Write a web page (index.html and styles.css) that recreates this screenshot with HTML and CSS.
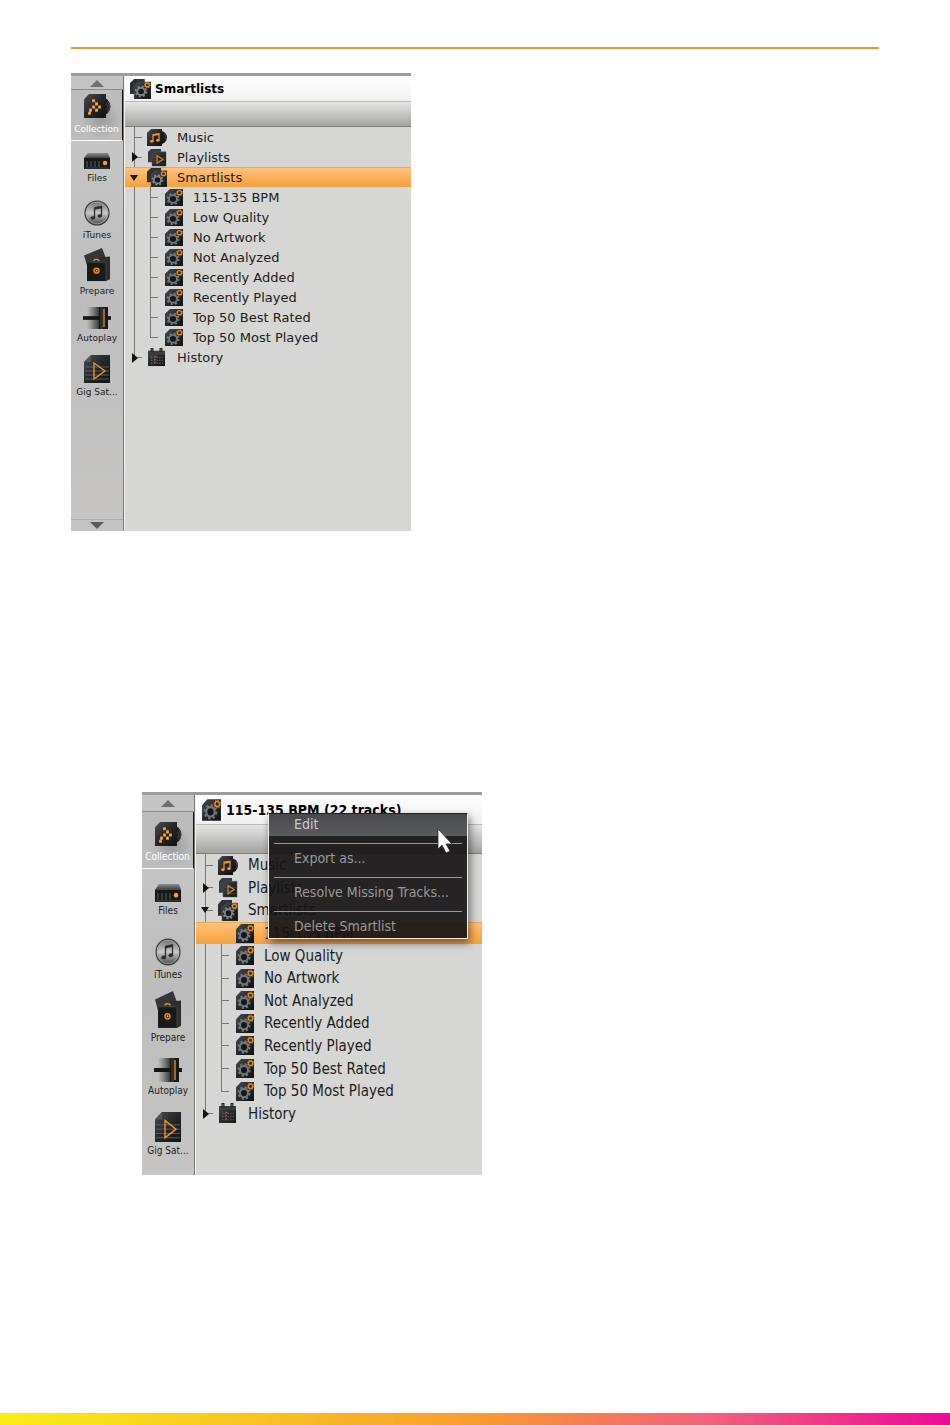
FILE: index.html
```html
<!DOCTYPE html>
<html lang="en">
<head>
    <meta charset="UTF-8">
    <meta name="viewport" content="width=device-width, initial-scale=1.0">
    <title>Smartlists</title>
    <link rel="stylesheet" href="styles.css">
</head>
<body>
    <!-- Icon shapes -->
    <svg class="sprite" aria-hidden="true">
        <defs>
            <linearGradient id="dark" x1="0" y1="0" x2="1" y2="1">
                <stop offset="0" stop-color="#484d52"/>
                <stop offset="0.5" stop-color="#24272a"/>
                <stop offset="1" stop-color="#111"/>
            </linearGradient>
            <linearGradient id="metal" x1="0" y1="0" x2="0" y2="1">
                <stop offset="0" stop-color="#6d6d6d"/>
                <stop offset="0.5" stop-color="#c9c9c9"/>
                <stop offset="1" stop-color="#444"/>
            </linearGradient>
            <linearGradient id="lid" x1="0" y1="0" x2="0" y2="1">
                <stop offset="0" stop-color="#8a8c8d"/>
                <stop offset="1" stop-color="#3d3f41"/>
            </linearGradient>
            <linearGradient id="fade">
                <stop offset="0" stop-color="#333" stop-opacity="0"/>
                <stop offset="1" stop-color="#222"/>
            </linearGradient>
        </defs>
        <symbol id="gear" viewBox="0 0 20 20" preserveAspectRatio="none">
            <path d="M6 1h13v18H1V6z" fill="url(#dark)"/>
            <circle cx="9" cy="11.500" r="5.500" fill="none" stroke="#71777b" stroke-width="2" stroke-dasharray="2.160 2.160"/>
            <circle cx="9" cy="11.500" r="4" fill="#15181a" stroke="#71777b" stroke-width="2"/>
            <circle cx="15.500" cy="5" r="3.300" fill="#2b2118" stroke="#a8651c" stroke-width="1" stroke-dasharray="1.300 1.290"/>
            <circle cx="15.500" cy="5" r="2.200" fill="#33261a" stroke="#dd8826" stroke-width="1.400"/>
        </symbol>
        <symbol id="gears" viewBox="0 0 20 20" preserveAspectRatio="none">
            <path d="M4 0h10v15H0V4z" fill="#2c3033"/>
            <path d="M8 3h12v17H4V7z" fill="url(#dark)" stroke="#4b5055" stroke-width="0.500"/>
            <circle cx="10.500" cy="12.500" r="5" fill="none" stroke="#7d868e" stroke-width="1.900" stroke-dasharray="1.960 1.960"/>
            <circle cx="10.500" cy="12.500" r="3.600" fill="#15181a" stroke="#7d868e" stroke-width="1.800"/>
            <circle cx="16.500" cy="6" r="2.900" fill="#2b2118" stroke="#b06b1f" stroke-width="1" stroke-dasharray="1.150 1.120"/>
            <circle cx="16.500" cy="6" r="2" fill="#33261a" stroke="#e8902a" stroke-width="1.300"/>
        </symbol>
        <symbol id="playlist" viewBox="0 0 20 20" preserveAspectRatio="none">
            <path d="M4 1h10v14H1V4z" fill="#383c40"/>
            <path d="M8 4h11v15H5V7z" fill="url(#dark)" stroke="#565b60" stroke-width="0.500"/>
            <path d="M6 10h12M6 13h12M6 16h12" stroke="#54585b" stroke-width="0.500"/>
            <path d="M10 8v8l6-4z" fill="none" stroke="#d88427" stroke-width="1.200"/>
        </symbol>
        <symbol id="music" viewBox="0 0 20 20" preserveAspectRatio="none">
            <circle cx="13" cy="10" r="7" fill="#1a1a1a"/>
            <path d="M17 6a5 5 0 0 1 1 7" fill="none" stroke="#555" stroke-width="0.700"/>
            <path d="M4 1h11v18H0V5z" fill="url(#dark)"/>
            <path d="M6 14V7l6-1v7" fill="none" stroke="#f39726" stroke-width="1.200"/>
            <path d="M6 7.500l6-1" stroke="#f39726" stroke-width="1.800"/>
            <ellipse cx="4.800" cy="14" rx="1.800" ry="1.400" fill="#f39726"/>
            <ellipse cx="10.800" cy="13" rx="1.800" ry="1.400" fill="#f39726"/>
        </symbol>
        <symbol id="calendar" viewBox="0 0 20 20" preserveAspectRatio="none">
            <path d="M1 3h17v16H1z" fill="url(#dark)"/>
            <path d="M1 3h17v4H1z" fill="#3a3e41"/>
            <path d="M5 0v4M14 0v4" stroke="#222" stroke-width="3"/>
            <path d="M5 1v2M14 1v2" stroke="#858585" stroke-width="0.800"/>
            <path d="M4 10h12M4 13h12M4 16h12" stroke="#5a5a5a" stroke-width="1.500" stroke-dasharray="1.500 1.200"/>
            <path d="M7 9h3M7 12h2M7 15h2" stroke="#8b5520" stroke-width="1.500"/>
        </symbol>
        <symbol id="collection" viewBox="0 0 28 26" preserveAspectRatio="none">
            <circle cx="18.500" cy="13" r="9" fill="#151515"/>
            <path d="M24.500 8a8 8 0 0 1 0 10M23.500 10a5 5 0 0 1 0 6" fill="none" stroke="#6a6a6a" stroke-width="0.700"/>
            <path d="M6 1h17v23H1V6z" fill="url(#dark)"/>
            <path d="M9 6h3v3H9zM12 9h3v3h-3zM9 12h3v3H9zM6 15h3v3H6zM12 15h3v3h-3zM15 12h3v3h-3zM5 18h3v3H5z" fill="#e58d24"/>
            <path d="M10 7h1v1h-1zM13 10h1v1h-1zM10 13h1v1h-1zM16 13h1v1h-1zM13 16h1v1h-1zM7 16h1v1h-1zM6 19h1v1h-1z" fill="#ffd38a"/>
        </symbol>
        <symbol id="files" viewBox="0 0 28 16" preserveAspectRatio="none">
            <path d="M5 0h20l2 5H1z" fill="url(#lid)"/>
            <path d="M1 5h26v11H1z" fill="#17181a"/>
            <path d="M4 8v6M8 8v6M12 8v6M16 8v6" stroke="#5d6063" stroke-width="1"/>
            <path d="M2 15h24" stroke="#55585a" stroke-width="0.700"/>
            <circle cx="22" cy="10" r="2.200" fill="#ff9d25"/>
        </symbol>
        <symbol id="itunes" viewBox="0 0 26 26" preserveAspectRatio="none">
            <circle cx="13" cy="13" r="12" fill="url(#metal)" stroke="#3b3b3b" stroke-width="1.200"/>
            <circle cx="13" cy="13" r="10.800" fill="none" stroke="#aaa" stroke-width="0.700"/>
            <path d="M10.500 18V8l7-1.500V16" fill="none" stroke="#2d2d2d" stroke-width="1.300"/>
            <path d="M10.500 8.500l7-1.500" stroke="#2d2d2d" stroke-width="2.500"/>
            <ellipse cx="8.800" cy="18" rx="2.300" ry="1.800" fill="#2d2d2d"/>
            <ellipse cx="15.800" cy="16" rx="2.300" ry="1.800" fill="#2d2d2d"/>
        </symbol>
        <symbol id="prepare" viewBox="0 0 28 36" preserveAspectRatio="none">
            <path d="M1 8l18-8 4 11-18 11z" fill="#34373a"/>
            <path d="M16 10l11-1v24l-4 2z" fill="#2b2d2f"/>
            <path d="M4 15h19v20H4z" fill="#191a1b"/>
            <path d="M4 15h19v19" fill="none" stroke="#4c4f52" stroke-width="0.700"/>
            <path d="M10.500 13.500c1-2 5-2 6 0" fill="none" stroke="#f09022" stroke-width="1.500"/>
            <circle cx="13.500" cy="24" r="2.500" fill="#2a1b0d" stroke="#e58a22" stroke-width="1.500"/>
            <circle cx="13.500" cy="24" r="1" fill="#ffad42"/>
        </symbol>
        <symbol id="autoplay" viewBox="0 0 28 24" preserveAspectRatio="none">
            <path d="M4 0h14v24H4z" fill="url(#fade)"/>
            <path d="M0 10h28v4H0z" fill="#151515"/>
            <path d="M16 0h9v24h-9z" fill="#171717"/>
            <path d="M17 0h3v24h-3z" fill="#2e2e2e"/>
            <path d="M21 2v20" stroke="#cf7d22" stroke-width="1.600"/>
        </symbol>
        <symbol id="gig" viewBox="0 0 28 28" preserveAspectRatio="none">
            <path d="M8 0h19v28H1V7z" fill="url(#dark)"/>
            <path d="M8 0v7H1z" fill="#50565a"/>
            <path d="M2 12h24M2 16h24M2 20h24M2 24h24" stroke="#707376" stroke-width="0.700"/>
            <path d="M11 8v16l11-8z" fill="none" stroke="#ed9228" stroke-width="1.400"/>
        </symbol>
    </svg>

    <main class="page">
        <hr class="rule">

        <section class="browser">
            <nav class="sidebar">
                <button class="scroll" aria-label="Scroll up"><span class="up"></span></button>
                <button class="source collection active"><svg><use href="#collection"/></svg>Collection</button>
                <button class="source files"><svg><use href="#files"/></svg>Files</button>
                <button class="source itunes"><svg><use href="#itunes"/></svg>iTunes</button>
                <button class="source prepare"><svg><use href="#prepare"/></svg>Prepare</button>
                <button class="source autoplay"><svg><use href="#autoplay"/></svg>Autoplay</button>
                <button class="source gig"><svg><use href="#gig"/></svg>Gig Sat...</button>
                <button class="scroll bottom" aria-label="Scroll down"><span class="down"></span></button>
            </nav>
            <div class="pane">
                <h2 class="title"><svg><use href="#gears"/></svg>Smartlists</h2>
                <div class="toolbar"></div>
                <ul class="tree">
                    <li><span class="trunk tick"></span><svg><use href="#music"/></svg><button>Music</button></li>
                    <li><span class="trunk tick closed"></span><svg><use href="#playlist"/></svg><button>Playlists</button></li>
                    <li class="selected"><span class="trunk open"></span><svg><use href="#gears"/></svg><button>Smartlists</button></li>
                    <li class="child"><span class="trunk"></span><span class="trunk tick"></span><svg><use href="#gear"/></svg><button>115-135 BPM</button></li>
                    <li class="child"><span class="trunk"></span><span class="trunk tick"></span><svg><use href="#gear"/></svg><button>Low Quality</button></li>
                    <li class="child"><span class="trunk"></span><span class="trunk tick"></span><svg><use href="#gear"/></svg><button>No Artwork</button></li>
                    <li class="child"><span class="trunk"></span><span class="trunk tick"></span><svg><use href="#gear"/></svg><button>Not Analyzed</button></li>
                    <li class="child"><span class="trunk"></span><span class="trunk tick"></span><svg><use href="#gear"/></svg><button>Recently Added</button></li>
                    <li class="child"><span class="trunk"></span><span class="trunk tick"></span><svg><use href="#gear"/></svg><button>Recently Played</button></li>
                    <li class="child"><span class="trunk"></span><span class="trunk tick"></span><svg><use href="#gear"/></svg><button>Top 50 Best Rated</button></li>
                    <li class="child"><span class="trunk"></span><span class="trunk tick last"></span><svg><use href="#gear"/></svg><button>Top 50 Most Played</button></li>
                    <li><span class="trunk tick last closed"></span><svg><use href="#calendar"/></svg><button>History</button></li>
                </ul>
            </div>
        </section>

        <section class="browser tall">
            <nav class="sidebar">
                <button class="scroll" aria-label="Scroll up"><span class="up"></span></button>
                <button class="source collection active"><svg><use href="#collection"/></svg>Collection</button>
                <button class="source files"><svg><use href="#files"/></svg>Files</button>
                <button class="source itunes"><svg><use href="#itunes"/></svg>iTunes</button>
                <button class="source prepare"><svg><use href="#prepare"/></svg>Prepare</button>
                <button class="source autoplay"><svg><use href="#autoplay"/></svg>Autoplay</button>
                <button class="source gig"><svg><use href="#gig"/></svg>Gig Sat...</button>
            </nav>
            <div class="pane">
                <h2 class="title"><svg><use href="#gear"/></svg>115-135 BPM (22 tracks)</h2>
                <div class="toolbar"></div>
                <ul class="tree">
                    <li><span class="trunk tick"></span><svg><use href="#music"/></svg><button>Music</button></li>
                    <li><span class="trunk tick closed"></span><svg><use href="#playlist"/></svg><button>Playlists</button></li>
                    <li><span class="trunk tick open"></span><svg><use href="#gears"/></svg><button>Smartlists</button></li>
                    <li class="child selected"><span class="trunk"></span><span class="trunk"></span><svg><use href="#gear"/></svg><button>115-135 BPM</button></li>
                    <li class="child"><span class="trunk"></span><span class="trunk tick"></span><svg><use href="#gear"/></svg><button>Low Quality</button></li>
                    <li class="child"><span class="trunk"></span><span class="trunk tick"></span><svg><use href="#gear"/></svg><button>No Artwork</button></li>
                    <li class="child"><span class="trunk"></span><span class="trunk tick"></span><svg><use href="#gear"/></svg><button>Not Analyzed</button></li>
                    <li class="child"><span class="trunk"></span><span class="trunk tick"></span><svg><use href="#gear"/></svg><button>Recently Added</button></li>
                    <li class="child"><span class="trunk"></span><span class="trunk tick"></span><svg><use href="#gear"/></svg><button>Recently Played</button></li>
                    <li class="child"><span class="trunk"></span><span class="trunk tick"></span><svg><use href="#gear"/></svg><button>Top 50 Best Rated</button></li>
                    <li class="child"><span class="trunk"></span><span class="trunk tick last"></span><svg><use href="#gear"/></svg><button>Top 50 Most Played</button></li>
                    <li><span class="trunk tick last closed"></span><svg><use href="#calendar"/></svg><button>History</button></li>
                </ul>
            </div>

            <!-- Context menu -->
            <div class="menu">
                <button class="hover">Edit</button>
                <hr>
                <button>Export as...</button>
                <hr>
                <button>Resolve Missing Tracks...</button>
                <hr>
                <button>Delete Smartlist</button>
                <svg class="cursor" viewBox="0 0 16 26"><path d="M1 1v20l4-4 4 8 4-2-4-7h6z" fill="#fff" stroke="#222" stroke-width="0.700"/></svg>
            </div>
        </section>
    </main>

    <footer class="stripe"></footer>
</body>
</html>
```
FILE: styles.css
```css
* {
    box-sizing: border-box;
}
body {
    margin: 0;
    min-height: 100vh;
    display: flex;
    flex-direction: column;
    background: #fff;
    font-family: "DejaVu Sans", Verdana, sans-serif;
    color: #1c1c1c;
}
button {
    margin: 0;
    padding: 0;
    border: none;
    background: none;
    font: inherit;
    color: inherit;
    text-align: left;
    white-space: nowrap;
    cursor: pointer;
}
.sprite {
    position: absolute;
    width: 0;
    height: 0;
}
.page {
    flex: 1;
    padding: 47px 71px 0;
}
.rule {
    height: 2px;
    margin: 0 0 24px;
    border: none;
    background: #e79a3c;
}

/* Browser panel */
.browser {
    position: relative;
    display: flex;
    width: 340px;
    min-height: 458px;
    border-top: 3px solid #9c9c9c;
    background: #d6d6d4;
}
.sidebar {
    display: flex;
    flex-direction: column;
    width: 53px;
    padding-top: 1px;
    border-right: 1px solid #777;
    background: linear-gradient(#c9c9c9, #bdbdbd 50%, #c6c5c4);
    font-size: 9px;
    line-height: 12px;
}
.scroll {
    display: flex;
    align-items: center;
    justify-content: center;
    height: 13px;
    border-bottom: 1px solid #8c8c8c;
    background: #c4c4c4;
}
.scroll.bottom {
    height: 12px;
    margin-top: auto;
    border-top: 1px solid #aaa;
    border-bottom: none;
}
.up, .down {
    border: 7px solid transparent;
    border-top-width: 0;
    border-bottom: 7px solid #707070;
}
.down {
    border-top: 7px solid #5c5c5c;
    border-bottom-width: 0;
}
.source {
    display: flex;
    flex-direction: column;
    align-items: center;
    justify-content: flex-end;
    gap: 3px;
}
.source svg {
    width: 28px;
    flex-shrink: 0;
}
.source.active {
    padding-bottom: 5px;
    border-bottom: 1px solid #fff;
    border-right: 1px solid #111;
    background: radial-gradient(circle at 60% 60%, #9c9c9c, #bcbcbc 45%);
    color: #fff;
}
.collection {
    height: 51px;
}
.collection svg {
    height: 27px;
}
.files {
    height: 43px;
}
.files svg {
    height: 16px;
}
.itunes {
    height: 57px;
}
.source.itunes svg {
    width: 26px;
    height: 26px;
}
.prepare {
    height: 56px;
}
.prepare svg {
    height: 34px;
}
.autoplay {
    height: 47px;
}
.autoplay svg {
    height: 22px;
}
.gig {
    height: 54px;
}
.gig svg {
    height: 28px;
}

/* Tree side */
.pane {
    flex: 1;
    border-left: 1px solid #f4f4f4;
    font-size: 13px;
}
.title {
    display: flex;
    align-items: center;
    gap: 4px;
    height: 26px;
    margin: 0;
    padding: 1px 0 0 5px;
    border-bottom: 1px solid #bbb;
    background: linear-gradient(#fff, #f1f1f1);
    font-size: 12px;
    color: #000;
}
.title svg {
    width: 21px;
    height: 20px;
}
.toolbar {
    height: 25px;
    border-bottom: 1px solid #7d7d7a;
    background: linear-gradient(#e6e6e5, #a3a3a0);
}
.tree {
    display: grid;
    grid-auto-rows: 1fr;
    height: 241px;
    margin: 0;
    padding: 0;
    list-style: none;
}
.tree li {
    display: flex;
    align-items: center;
    padding-left: 9px;
}
.tree svg {
    width: 20px;
    height: 19px;
    margin-right: 10px;
}
.tree .child svg {
    width: 20px;
    margin-right: 9px;
}
.tree .selected {
    border-top: 1px solid #e8a85a;
    background: linear-gradient(#fdc27a, #f5a13c);
}
.trunk {
    display: flex;
    align-items: center;
    align-self: stretch;
    width: 13px;
    background: linear-gradient(#777, #777) left top / 1px 100% no-repeat;
}
.child .trunk {
    width: 16px;
}
.child .trunk + .trunk {
    width: 14px;
}
.tick {
    background: linear-gradient(#777, #777) left top / 1px 100% no-repeat,
        linear-gradient(#777, #777) left center / 8px 1px no-repeat;
}
.tick.last {
    background-size: 1px 50%, 8px 1px;
}
.closed::before {
    content: "";
    margin-left: -2px;
    border: 5px solid transparent;
    border-left: 6px solid #111;
    border-right-width: 0;
}
.open::before {
    content: "";
    margin-left: -4px;
    border: 4px solid transparent;
    border-top: 6px solid #111;
    border-bottom-width: 0;
}
.selected .trunk {
    background: none;
}

/* Taller panel with the menu open */
.tall {
    min-height: 383px;
    margin: 261px 0 0 71px;
    font-family: "DejaVu Sans Condensed", "DejaVu Sans", sans-serif;
}
.tall .sidebar {
    font-size: 10px;
}
.tall .scroll {
    height: 16px;
}
.tall .collection {
    height: 57px;
}
.tall .files {
    height: 48px;
}
.tall .files svg {
    height: 18px;
}
.tall .itunes {
    height: 64px;
}
.tall .itunes svg {
    height: 28px;
}
.tall .prepare {
    height: 63px;
}
.tall .prepare svg {
    height: 38px;
}
.tall .autoplay {
    height: 53px;
}
.tall .autoplay svg {
    height: 24px;
}
.tall .gig {
    height: 60px;
}
.tall .gig svg {
    height: 30px;
}
.tall .pane {
    font-size: 15px;
}
.tall .title {
    height: 30px;
    font-size: 14px;
}
.tall .title svg {
    height: 24px;
}
.tall .toolbar {
    height: 29px;
}
.tall .tree {
    height: 271px;
}
.tall .tree svg {
    height: 21px;
}

/* Context menu */
.menu {
    position: absolute;
    top: 18px;
    left: 126px;
    width: 200px;
    border: 1px solid #eee;
    border-top-color: #222;
    background: rgba(22, 20, 20, 0.92);
    box-shadow: 2px 4px 8px rgba(0, 0, 0, 0.5);
    font-size: 14px;
    color: #999;
}
.menu button {
    display: block;
    width: 100%;
    height: 22px;
    padding: 0 0 2px 25px;
}
.menu .hover {
    background: linear-gradient(#48494d, #5b5c61);
    color: #ccc;
}
.menu hr {
    height: 1px;
    margin: 7px 5px 4px;
    border: none;
    background: #999;
}
.cursor {
    position: absolute;
    top: 14px;
    right: 14px;
    width: 16px;
    height: 26px;
}

.stripe {
    height: 12px;
    background: linear-gradient(90deg, #f9ef16, #f89c31 50%, #f0607c 75%, #ea0c98);
}
```
